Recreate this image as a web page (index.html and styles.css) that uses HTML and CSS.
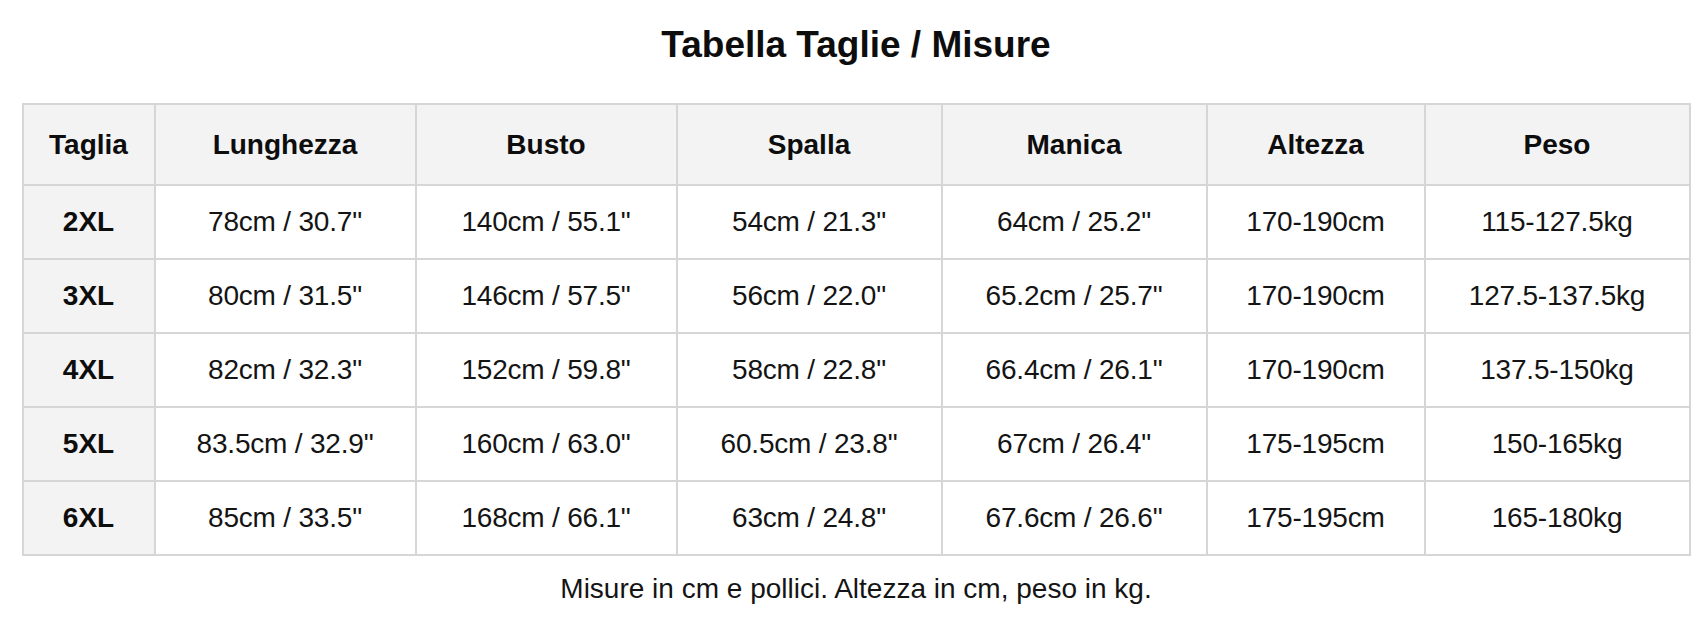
FILE: index.html
```html
<!DOCTYPE html>
<html lang="it">
<head>
<meta charset="utf-8">
<title>Tabella Taglie / Misure</title>
<link rel="stylesheet" href="styles.css">
</head>
<body>
<main class="page">
  <h1 class="title">Tabella Taglie / Misure</h1>
  <table class="sizes">
    <colgroup>
      <col class="c-size">
      <col class="c-wide">
      <col class="c-wide">
      <col class="c-wider">
      <col class="c-wider">
      <col class="c-mid">
      <col class="c-wider">
    </colgroup>
    <thead>
      <tr>
        <th>Taglia</th>
        <th>Lunghezza</th>
        <th>Busto</th>
        <th>Spalla</th>
        <th>Manica</th>
        <th>Altezza</th>
        <th>Peso</th>
      </tr>
    </thead>
    <tbody>
      <tr>
        <th class="size">2XL</th>
        <td>78cm / 30.7"</td>
        <td>140cm / 55.1"</td>
        <td>54cm / 21.3"</td>
        <td>64cm / 25.2"</td>
        <td>170-190cm</td>
        <td>115-127.5kg</td>
      </tr>
      <tr>
        <th class="size">3XL</th>
        <td>80cm / 31.5"</td>
        <td>146cm / 57.5"</td>
        <td>56cm / 22.0"</td>
        <td>65.2cm / 25.7"</td>
        <td>170-190cm</td>
        <td>127.5-137.5kg</td>
      </tr>
      <tr>
        <th class="size">4XL</th>
        <td>82cm / 32.3"</td>
        <td>152cm / 59.8"</td>
        <td>58cm / 22.8"</td>
        <td>66.4cm / 26.1"</td>
        <td>170-190cm</td>
        <td>137.5-150kg</td>
      </tr>
      <tr>
        <th class="size">5XL</th>
        <td>83.5cm / 32.9"</td>
        <td>160cm / 63.0"</td>
        <td>60.5cm / 23.8"</td>
        <td>67cm / 26.4"</td>
        <td>175-195cm</td>
        <td>150-165kg</td>
      </tr>
      <tr>
        <th class="size">6XL</th>
        <td>85cm / 33.5"</td>
        <td>168cm / 66.1"</td>
        <td>63cm / 24.8"</td>
        <td>67.6cm / 26.6"</td>
        <td>175-195cm</td>
        <td>165-180kg</td>
      </tr>
    </tbody>
  </table>
  <p class="note">Misure in cm e pollici. Altezza in cm, peso in kg.</p>
</main>
</body>
</html>
```

FILE: styles.css
```css
html, body {
  margin: 0;
  padding: 0;
  background: #ffffff;
}

body {
  font-family: "Liberation Sans", Arial, Helvetica, sans-serif;
  color: #111111;
}

.page {
  width: 1666px;
  padding: 23px 0 0 23px;
  display: flex;
  flex-direction: column;
  align-items: center;
}

.title {
  margin: 0 0 36px;
  font-size: 37px;
  line-height: 44px;
  font-weight: 700;
  color: #0d0d0d;
  text-align: center;
}

.sizes {
  width: 1666px;
  table-layout: fixed;
  border-collapse: collapse;
  border: 2px solid #d6d6d6;
}

.c-size { width: 132px; }
.c-wide { width: 261px; }
.c-wider { width: 265px; }
.c-mid { width: 218px; }

.sizes th,
.sizes td {
  border: 2px solid #d6d6d6;
  padding: 0;
  text-align: center;
  vertical-align: middle;
  font-size: 28px;
  line-height: 32px;
  white-space: nowrap;
}

.sizes thead th {
  height: 79px;
  background: #f3f3f3;
  font-weight: 700;
  color: #0d0d0d;
}

.sizes tbody td,
.sizes tbody th {
  height: 72px;
}

.sizes tbody td {
  background: #ffffff;
  font-weight: 400;
  letter-spacing: -0.2px;
  color: #141414;
}

.sizes tbody th.size {
  background: #f3f3f3;
  font-weight: 700;
  color: #0d0d0d;
}

.note {
  margin: 16px 0 0;
  font-size: 28px;
  line-height: 33px;
  color: #141414;
  text-align: center;
}
```
